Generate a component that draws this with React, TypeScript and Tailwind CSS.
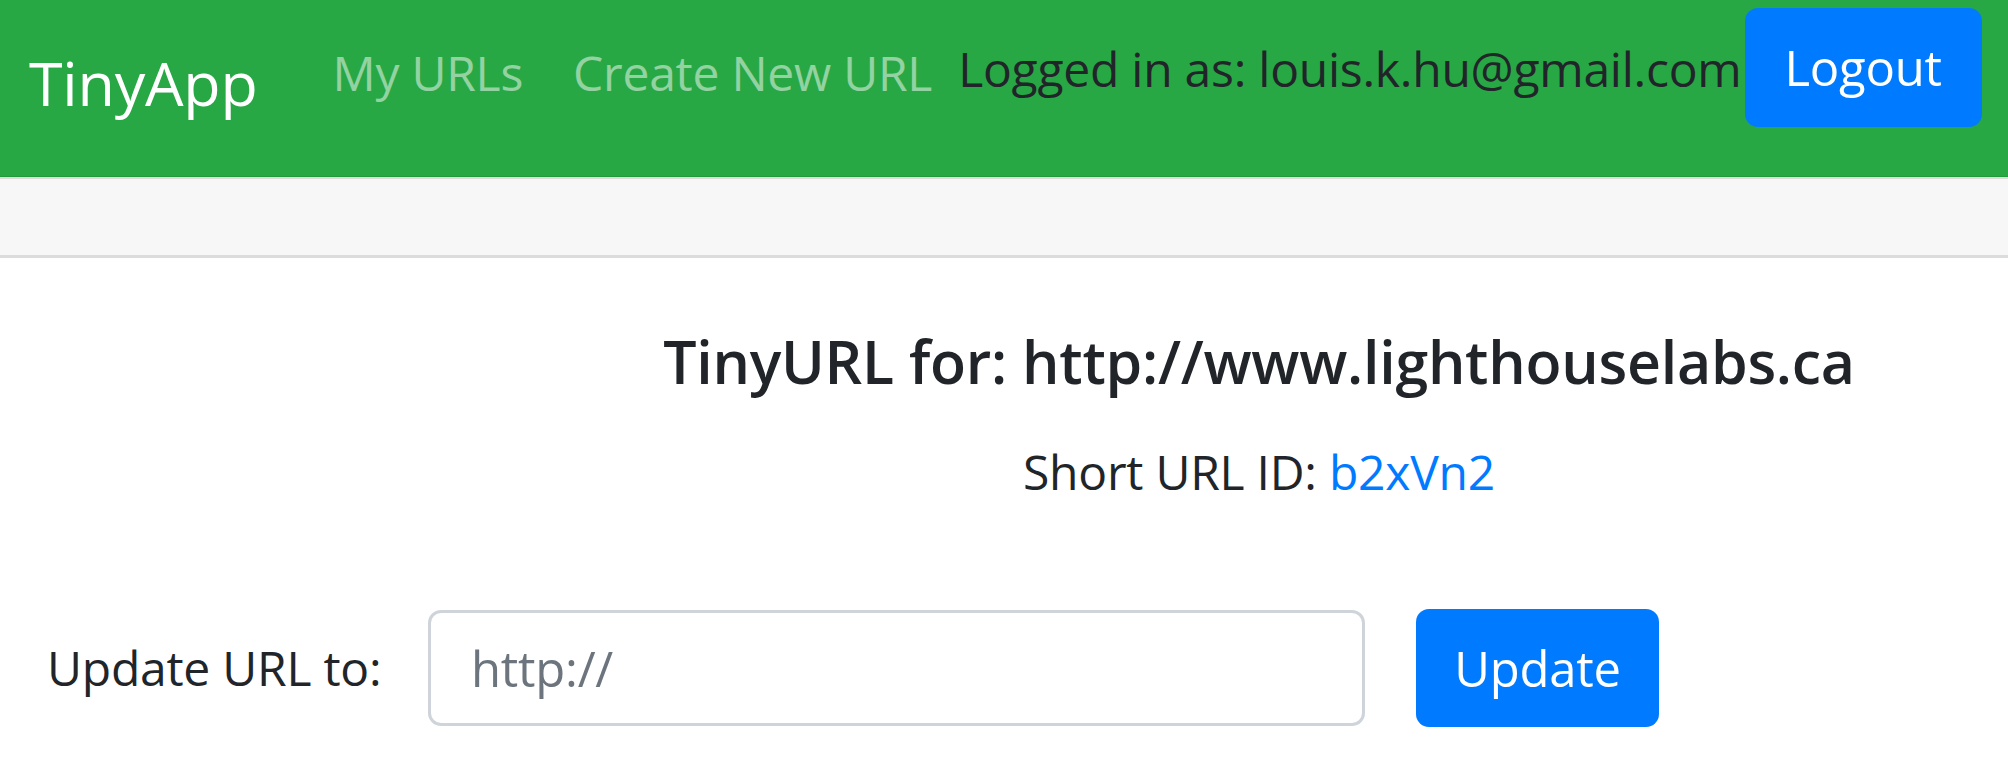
export default function App() {
  return (
    <div className="min-h-screen bg-white font-['Open_Sans',sans-serif] tracking-[-0.015em] text-[#212529]">
      {/* navbar */}
      <nav className="flex h-[177px] items-start whitespace-nowrap border-b border-[#1f9b3b] bg-[#28a745] pl-[29px]">
        <a href="#" className="mt-[52px] text-[61px] leading-none text-white">
          TinyApp
        </a>
        <a href="#" className="ml-[75px] mt-[49px] text-[48px] leading-none text-white/50">
          My URLs
        </a>
        <a href="#" className="ml-[50px] mt-[49px] text-[48px] leading-none text-white/50">
          Create New URL
        </a>
        <span className="ml-[26px] mt-[45px] text-[48px] leading-none">
          Logged in as: louis.k.hu@gmail.com
        </span>
        <button className="ml-[3px] mt-[8px] h-[119px] w-[237px] shrink-0 rounded-[13px] bg-[#007bff] text-[49px] leading-none text-white">
          Logout
        </button>
      </nav>

      <div className="h-[81px] border-t-2 border-b-[3px] border-[#dcdcdc] bg-[#f7f7f7]" />

      {/* url info */}
      <main className="pl-[510px] text-center">
        <h3 className="mt-[74px] whitespace-nowrap text-[59px] font-semibold leading-none">
          TinyURL for: http://www.lighthouselabs.ca
        </h3>
        <p className="mt-[57px] text-[48px] leading-none">
          Short URL ID: <a href="#" className="text-[#007bff]">b2xVn2</a>
        </p>
      </main>

      <form className="mt-[113px] flex items-center pl-[47px]">
        <label className="w-[330px] whitespace-nowrap text-[48px] leading-none">Update URL to:</label>
        <input
          type="text"
          placeholder="http://"
          className="ml-[51px] h-[116px] w-[937px] rounded-[13px] border-[3px] border-[#ced4da] bg-white px-[40px] text-[49px] outline-none placeholder:text-[#6c757d]"
        />
        <button
          type="button"
          className="ml-[51px] h-[118px] w-[243px] rounded-[13px] bg-[#007bff] text-[49px] leading-none text-white"
        >
          Update
        </button>
      </form>
    </div>
  )
}
